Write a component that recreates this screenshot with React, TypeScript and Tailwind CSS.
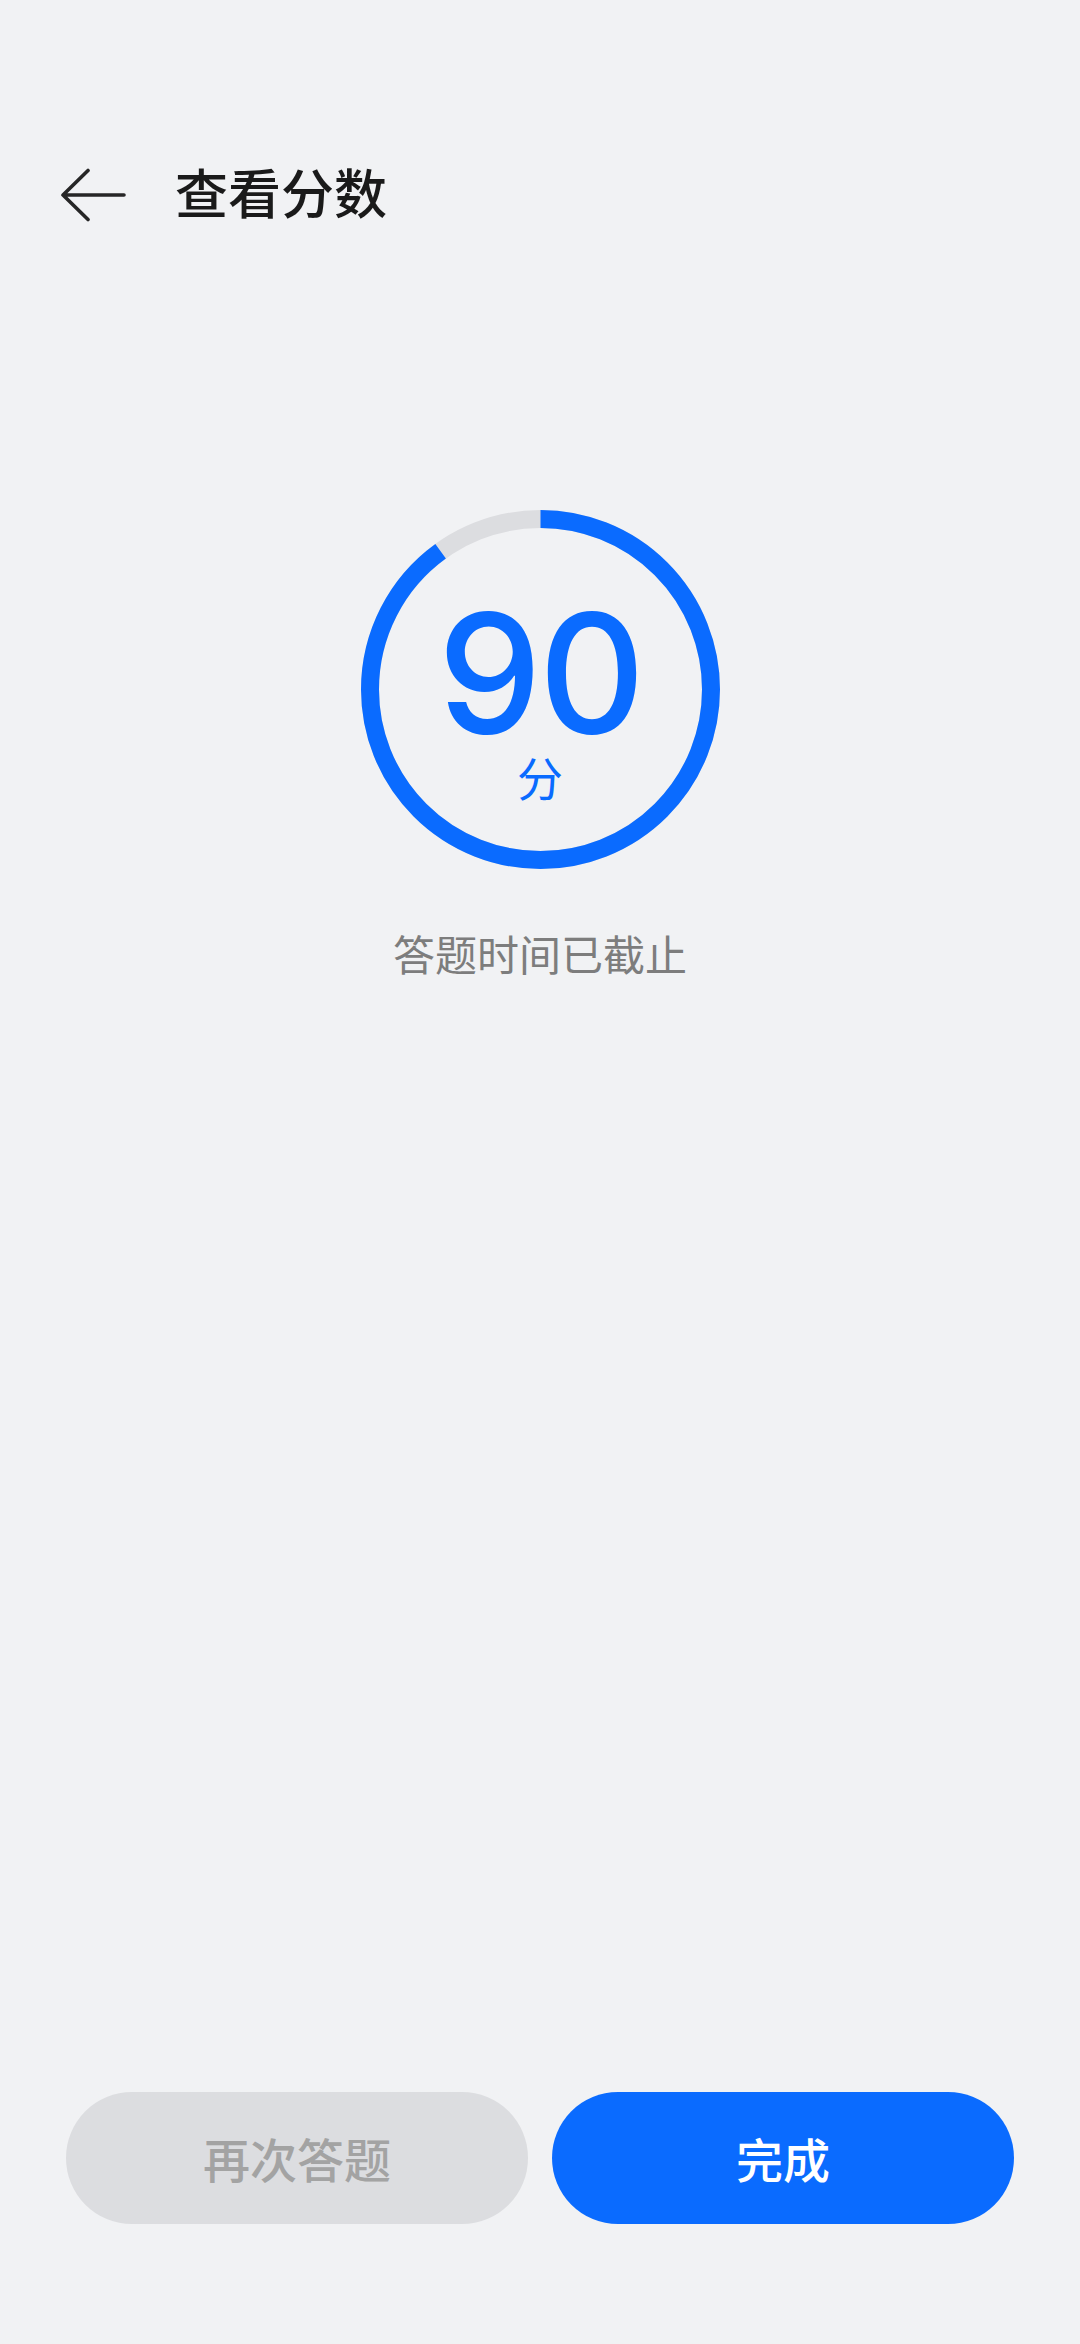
import React from "react";

const R = 170.5;
const C = 2 * Math.PI * R;

function ScoreRing({ score }: { score: number }) {
  return (
    <div className="relative w-[359px] h-[359px]">
      <svg className="absolute inset-0" width="359" height="359" viewBox="0 0 359 359">
        <circle cx="179.5" cy="179.5" r={R} fill="none" stroke="#dcdde0" strokeWidth="18" />
        <circle
          cx="179.5"
          cy="179.5"
          r={R}
          fill="none"
          stroke="#0a6bff"
          strokeWidth="18"
          strokeDasharray={`${(C * score) / 100} ${C}`}
          transform="rotate(-90 179.5 179.5)"
        />
      </svg>
      <div className="relative h-full flex flex-col items-center justify-center pt-[12px] text-[#0a6bff]">
        <div className="text-[165px] leading-[160px] font-medium font-['Inter',sans-serif] tracking-[-3px]">
          {score}
        </div>
        <div className="text-[46px] leading-none font-['Noto_Sans_CJK_SC',sans-serif]">分</div>
      </div>
    </div>
  );
}

export default function App() {
  return (
    <div className="min-h-[2344px] bg-[#f1f2f4] flex flex-col font-['Noto_Sans_CJK_SC',sans-serif]">
      <div className="mt-[135px] h-[112px] flex items-center pl-[60px]">
        <svg width="66" height="54" viewBox="0 0 66 54" fill="none" stroke="#262626" strokeWidth="3.6" strokeLinecap="round" strokeLinejoin="round" className="mt-[8px]">
          <path d="M28 2.5 L3 27 L28 51.5 M3 27 H64" />
        </svg>
        <h1 className="ml-[49px] text-[53px] font-medium text-[#1a1a1a] leading-none">查看分数</h1>
      </div>

      <div className="mt-[263px] flex justify-center">
        <ScoreRing score={90} />
      </div>

      <p className="mt-[56px] text-center text-[42px] leading-[55px] text-[#7d7d7d]">答题时间已截止</p>

      <div className="mt-auto pb-[120px] px-[66px] flex gap-[24px]">
        <button className="flex-1 h-[132px] rounded-full bg-[#dcdde0] text-[#a3a3a3] text-[47px] font-medium">
          再次答题
        </button>
        <button className="flex-1 h-[132px] rounded-full bg-[#0a6bff] text-white text-[47px] font-medium">
          完成
        </button>
      </div>
    </div>
  );
}
